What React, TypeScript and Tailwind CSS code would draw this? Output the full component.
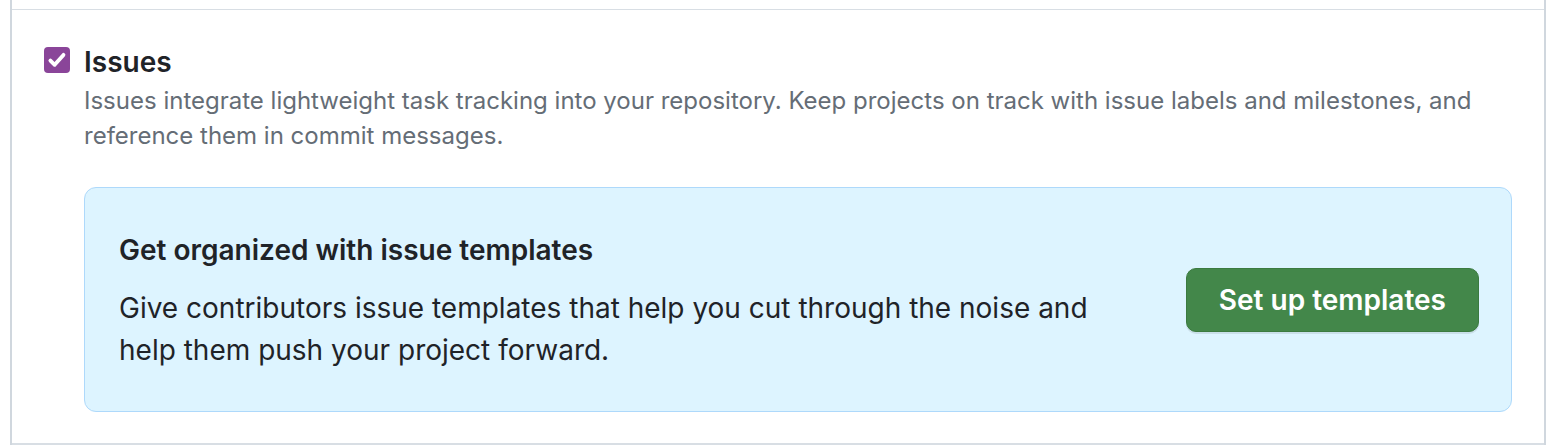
import React from 'react';

const CheckIcon: React.FC<{ className?: string }> = ({ className }) => (
  <svg viewBox="0 0 16 16" className={className} fill="none">
    <path d="M3.2 8.4l3.1 3.1 6.4-7.2" stroke="white" strokeWidth="2.8" strokeLinecap="round" strokeLinejoin="round" />
  </svg>
);

const TemplatesCallout: React.FC = () => (
  <div className="mt-[34px] flex items-center justify-between rounded-[12px] border border-[#aed9fb] bg-[#ddf4ff] pb-[40px] pl-[34px] pr-[32px] pt-[41px]">
    <div className="max-w-[990px]">
      <h3 className="text-[28px] font-semibold leading-[42px] text-[#1f2328]">Get organized with issue templates</h3>
      <p className="mt-[16px] text-[28px] leading-[42px] text-[#1f2328]">
        Give contributors issue templates that help you cut through the noise and help them push your project forward.
      </p>
    </div>
    <button className="h-16 shrink-0 rounded-[10px] border border-[#3b7a40] bg-[#43874a] px-[32px] text-[28px] font-semibold text-white shadow-[0_2px_0_rgba(31,35,40,0.1)]">
      Set up templates
    </button>
  </div>
);

const App: React.FC = () => {
  return (
    <div className="h-[448px] w-full bg-white" style={{ fontFamily: 'Inter, "Noto Sans", sans-serif' }}>
      <div className="ml-[10px] w-[1536px] border-x-2 border-[#d0d7de]">
        <div className="h-[9px]" />
        <div className="flex gap-[14px] border-t border-b-2 border-[#d8dee4] pb-[31px] pl-8 pr-8 pt-[31px]">
          <div className="mt-[6px] flex h-[26px] w-[26px] shrink-0 items-center justify-center rounded-[4px] bg-[#8a4599]">
            <CheckIcon className="h-[22px] w-[22px]" />
          </div>
          <div className="flex-1">
            <h2 className="text-[28px] font-semibold leading-[42px] text-[#1f2328]">Issues</h2>
            <p className="text-[24px] leading-[35px] text-[#656d76]">
              Issues integrate lightweight task tracking into your repository. Keep projects on track with issue labels and milestones, and reference them in commit messages.
            </p>
            <TemplatesCallout />
          </div>
        </div>
      </div>
    </div>
  );
};

export default App;
